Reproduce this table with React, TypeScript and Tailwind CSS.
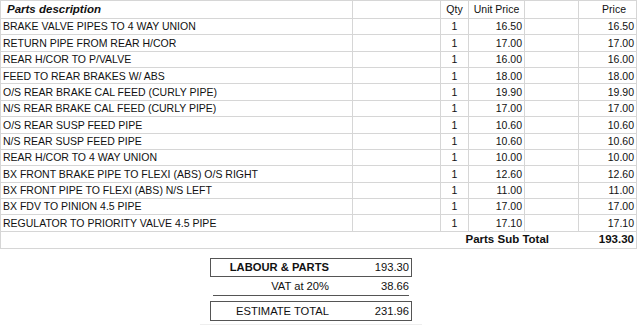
import React from "react";

const rows: [string, string, string][] = [
  ["BRAKE VALVE PIPES TO 4 WAY UNION", "16.50", "16.50"],
  ["RETURN PIPE FROM REAR H/COR", "17.00", "17.00"],
  ["REAR H/COR TO P/VALVE", "16.00", "16.00"],
  ["FEED TO REAR BRAKES W/ ABS", "18.00", "18.00"],
  ["O/S REAR BRAKE CAL FEED (CURLY PIPE)", "19.90", "19.90"],
  ["N/S REAR BRAKE CAL FEED (CURLY PIPE)", "17.00", "17.00"],
  ["O/S REAR SUSP FEED PIPE", "10.60", "10.60"],
  ["N/S REAR SUSP FEED PIPE", "10.60", "10.60"],
  ["REAR H/COR TO 4 WAY UNION", "10.00", "10.00"],
  ["BX FRONT BRAKE PIPE TO FLEXI (ABS) O/S RIGHT", "12.60", "12.60"],
  ["BX FRONT PIPE TO FLEXI (ABS) N/S LEFT", "11.00", "11.00"],
  ["BX FDV TO PINION 4.5 PIPE", "17.00", "17.00"],
  ["REGULATOR TO PRIORITY VALVE 4.5 PIPE", "17.10", "17.10"],
];

const cell = "border border-[#d6d6d6] p-0 leading-none";

export default function App() {
  return (
    <div
      className="w-[640px] h-[332px] bg-white text-[#111] overflow-hidden"
      style={{ fontFamily: '"Liberation Sans", Arial, sans-serif' }}
    >
      <table className="border-collapse table-fixed w-[636px] text-[10.5px]">
        <colgroup>
          <col className="w-[352px]" />
          <col className="w-[88px]" />
          <col className="w-[28px]" />
          <col className="w-[56px]" />
          <col className="w-[54px]" />
          <col className="w-[58px]" />
        </colgroup>
        <thead>
          <tr className="h-[18px]">
            <th className={`${cell} text-left pl-[6px] font-bold italic text-[11.5px]`}>
              Parts description
            </th>
            <th className={cell}></th>
            <th className={`${cell} text-center font-normal`}>Qty</th>
            <th className={`${cell} text-center font-normal`}>Unit Price</th>
            <th className={cell}></th>
            <th className={`${cell} text-right pr-[10px] font-normal`}>Price</th>
          </tr>
        </thead>
        <tbody>
          {rows.map(([d, u, p], i) => (
            <tr key={i} className="h-[16.36px]">
              <td className={`${cell} pl-[2px] whitespace-nowrap`}>{d}</td>
              <td className={cell}></td>
              <td className={`${cell} text-center`}>1</td>
              <td className={`${cell} text-right pr-[2px]`}>{u}</td>
              <td className={cell}></td>
              <td className={`${cell} text-right pr-[2px]`}>{p}</td>
            </tr>
          ))}
          <tr className="h-[17.5px]">
            <td colSpan={6} className={`${cell} font-bold text-[11.5px]`}>
              <div className="flex items-center">
                <div className="w-[548px] text-right">Parts Sub Total</div>
                <div className="flex-1 text-right pr-[2px]">193.30</div>
              </div>
            </td>
          </tr>
        </tbody>
      </table>

      <div className="ml-[210px] mt-[9px] w-[202px] text-[11.2px] leading-none">
        <div className="flex items-center h-[19px] border-[1.5px] border-[#555]">
          <div className="w-[118px] text-right font-bold">LABOUR &amp; PARTS</div>
          <div className="flex-1 text-right pr-[2px]">193.30</div>
        </div>
        <div className="flex items-center h-[19px] mx-[3px] border-b-[1.5px] border-[#555]">
          <div className="w-[116px] text-right">VAT at 20%</div>
          <div className="flex-1 text-right">38.66</div>
        </div>
        <div className="flex items-center h-[20px] mt-[5px] border-[1.5px] border-[#555]">
          <div className="w-[118px] text-right">ESTIMATE TOTAL</div>
          <div className="flex-1 text-right pr-[2px]">231.96</div>
        </div>
        <div className="mt-[3px] -mx-[10px] border-t border-[#eee]"></div>
      </div>
    </div>
  );
}
